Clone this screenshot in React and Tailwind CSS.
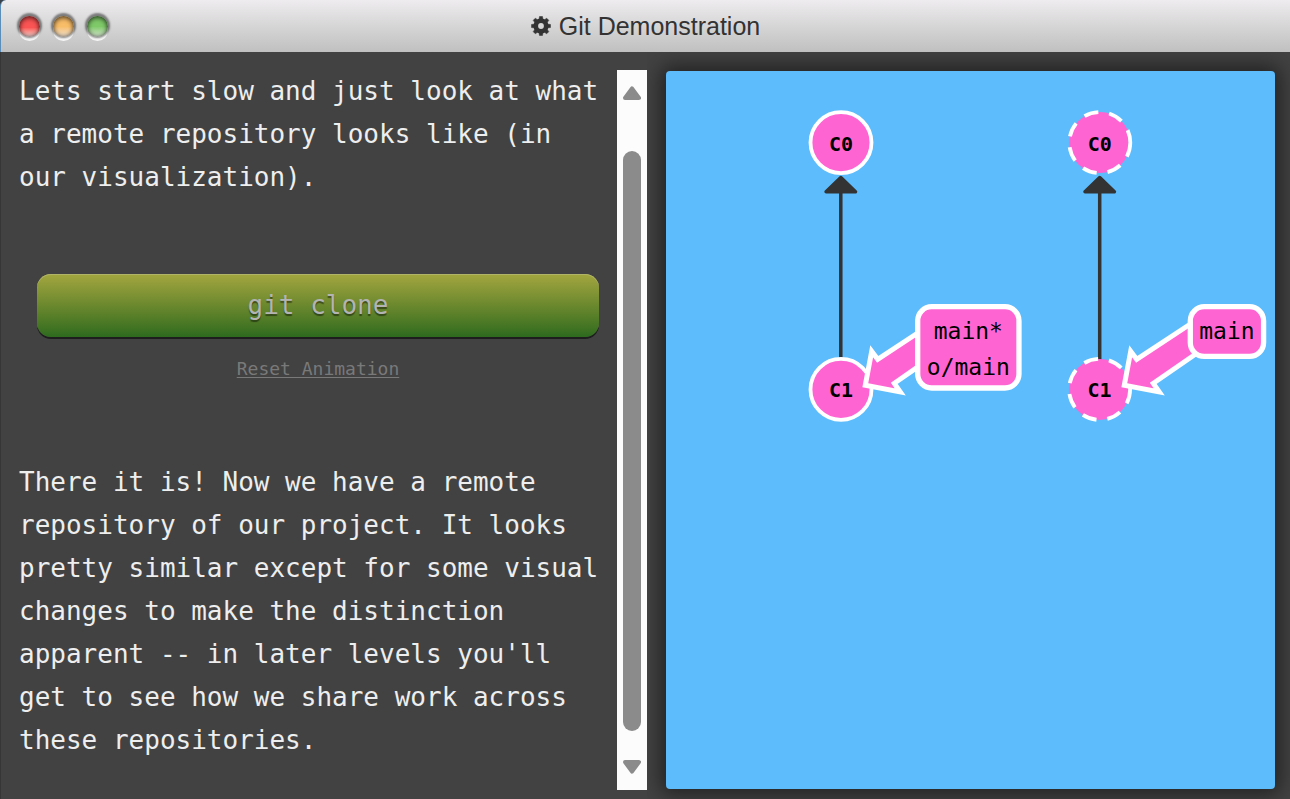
import React from "react";

const TEETH = [0, 45, 90, 135, 180, 225, 270, 315];

const LIGHT =
  "size-[21px] rounded-full shadow-[inset_0_2px_5px_rgba(0,0,0,0.45),inset_0_0_4px_rgba(0,0,0,0.5),0_-1px_2px_2px_rgba(0,0,0,0.45),0_4px_0_0_#f6f6f6]";

function Gear() {
  return (
    <svg viewBox="0 0 20 20" className="size-5" fill="none" stroke="currentColor" aria-hidden="true">
      <circle cx="10" cy="10" r="5.200" strokeWidth="4.600" />
      {TEETH.map((angle) => (
        <path
          key={angle}
          transform={`rotate(${angle} 10 10)`}
          d="M7.900 3.800 8.500 .5h3l.6 3.300z"
          fill="currentColor"
          strokeWidth=".5"
          strokeLinejoin="round"
        />
      ))}
    </svg>
  );
}

function TitleBar() {
  return (
    <div className="bg-[#39424c]">
      <header className="grid h-[52px] grid-cols-[1fr_auto_1fr] items-center rounded-tl-md border-l border-[#5b8fb9] bg-linear-to-b from-[#eeecee] to-[#c0c0c0] px-[18px]">
        <div className="flex gap-[13px]">
          <button aria-label="Close" className={`${LIGHT} bg-linear-to-b from-[#fa5454] from-55% to-[#eed2d2]`} />
          <button aria-label="Minimize" className={`${LIGHT} bg-linear-to-b from-[#f8bd68] from-50% to-[#eee2d0]`} />
          <button aria-label="Confirm" className={`${LIGHT} bg-linear-to-b from-[#7fc969] from-50% to-[#d6e4d0]`} />
        </div>
        <h1 className="flex items-center gap-2 font-['Liberation_Sans',Arial,sans-serif] text-[25px] leading-8 text-[#333]">
          <Gear />
          Git Demonstration
        </h1>
      </header>
    </div>
  );
}

function ScrollTrack() {
  return (
    <div className="flex w-[30px] shrink-0 flex-col items-center bg-[#fcfcfc] pt-4 pb-4 text-[#8b8b8b]">
      <button aria-label="Scroll up">
        <svg viewBox="0 0 18 14" className="h-3.5 w-[18px]" fill="currentColor" stroke="currentColor" strokeWidth="4" strokeLinejoin="round">
          <path d="M9 2.400 16 12H2z" />
        </svg>
      </button>
      <div className="mt-[51px] mb-[29px] w-[18px] flex-1 rounded-full bg-[#8b8b8b]" />
      <button aria-label="Scroll down">
        <svg viewBox="0 0 18 14" className="h-3.5 w-[18px]" fill="currentColor" stroke="currentColor" strokeWidth="4" strokeLinejoin="round">
          <path d="M9 11.600 16 2H2z" />
        </svg>
      </button>
    </div>
  );
}

function Lesson() {
  return (
    <div className="flex flex-1 flex-col">
      <p className="pr-2">
        Lets start slow and just look at what a remote repository looks like (in our visualization).
      </p>
      <div className="mx-[18px] mt-[75px] flex flex-col items-center">
        <button className="h-[63px] w-full rounded-[14px] bg-linear-to-b from-[#a3a63f] to-[#2d6b1e] text-[#b3b3b3] shadow-[inset_0_1px_0_#b0b469,0_2px_0_#1e1e1e] [text-shadow:0_2px_1px_rgba(0,0,0,0.45)]">
          git clone
        </button>
        <a href="#reset" className="mt-5 text-[18px] leading-6 text-[#797979] underline decoration-1 underline-offset-2">
          Reset Animation
        </a>
      </div>
      <p className="mt-20 pr-2">
        There it is! Now we have a remote repository of our project. It looks pretty similar except for some
        visual changes to make the distinction apparent -- in later levels you'll get to see how we share work
        across these repositories.
      </p>
    </div>
  );
}

function Commit({ x, y, label, remote }) {
  return (
    <g>
      <circle
        cx={x}
        cy={y}
        r="30.500"
        fill="#ff65d2"
        stroke="#fff"
        strokeWidth="3.800"
        strokeDasharray={remote ? "14.500 11" : undefined}
      />
      <text x={x} y={y + 8} textAnchor="middle" fontSize="20" fontWeight="bold">
        {label}
      </text>
    </g>
  );
}

function Edge({ x }) {
  return (
    <g fill="#333" stroke="#333" strokeWidth="3.500" strokeLinejoin="round">
      <path d={`M${x} 119V290`} />
      <path d={`M${x} 106.500l14.700 14.200h-29.400z`} />
    </g>
  );
}

function BranchTag({ x, width, height, lines, shift, reach }) {
  return (
    <g>
      <path
        transform={`translate(${shift} 0)`}
        d={`M${250.7 + reach} ${262.7 - reach * 0.66}L211.700 288.300 205.700 280.300 199.300 314.300 234.300 321 228.300 312.300 ${250.7 + reach} ${296.5 - reach * 0.68}z`}
        fill="#ff65d2"
        stroke="#fff"
        strokeWidth="5"
      />
      <rect x={x} y="235.700" width={width} height={height} rx="14" fill="#ff65d2" stroke="#fff" strokeWidth="5.300" />
      {lines.map((line, i) => (
        <text key={line} x={x + width / 2} y={268 + i * 36} textAnchor="middle" fontSize="23">
          {line}
        </text>
      ))}
    </g>
  );
}

function Graph() {
  return (
    <svg
      viewBox="0 0 609 718"
      preserveAspectRatio="xMidYMin meet"
      className="w-full"
      role="img"
      aria-label="Local and remote commit graphs"
    >
      <Edge x={174.8} />
      <Edge x={433.7} />
      <Commit x={175} y={71.6} label="C0" />
      <Commit x={175} y={318.4} label="C1" />
      <Commit x={433.8} y={71.6} label="C0" remote />
      <Commit x={433.6} y={318.4} label="C1" remote />
      <BranchTag x={251.7} width={101.3} height={81.3} lines={["main*", "o/main"]} shift={0} reach={12} />
      <BranchTag x={524.3} width={73.3} height={49.7} lines={["main"]} shift={259} reach={28} />
    </svg>
  );
}

export default function App() {
  return (
    <div className="flex min-h-screen flex-col bg-[#424242] font-['DejaVu_Sans_Mono',monospace]">
      <TitleBar />
      <main className="grid flex-1 grid-cols-[628fr_609fr] gap-[19px] border-l border-[#363636] pt-[18px] pr-[15px] pb-[9px] pl-[18px] text-[26px] leading-[43px] text-[#eee]">
        <section className="flex">
          <Lesson />
          <ScrollTrack />
        </section>
        <section className="mt-px mb-px flex items-start rounded bg-[#5cbcfc] shadow-[0_0_20px_5px_rgba(0,0,0,0.5)] [clip-path:inset(-19px_-15px_-10px_-19px)]">
          <Graph />
        </section>
      </main>
    </div>
  );
}
